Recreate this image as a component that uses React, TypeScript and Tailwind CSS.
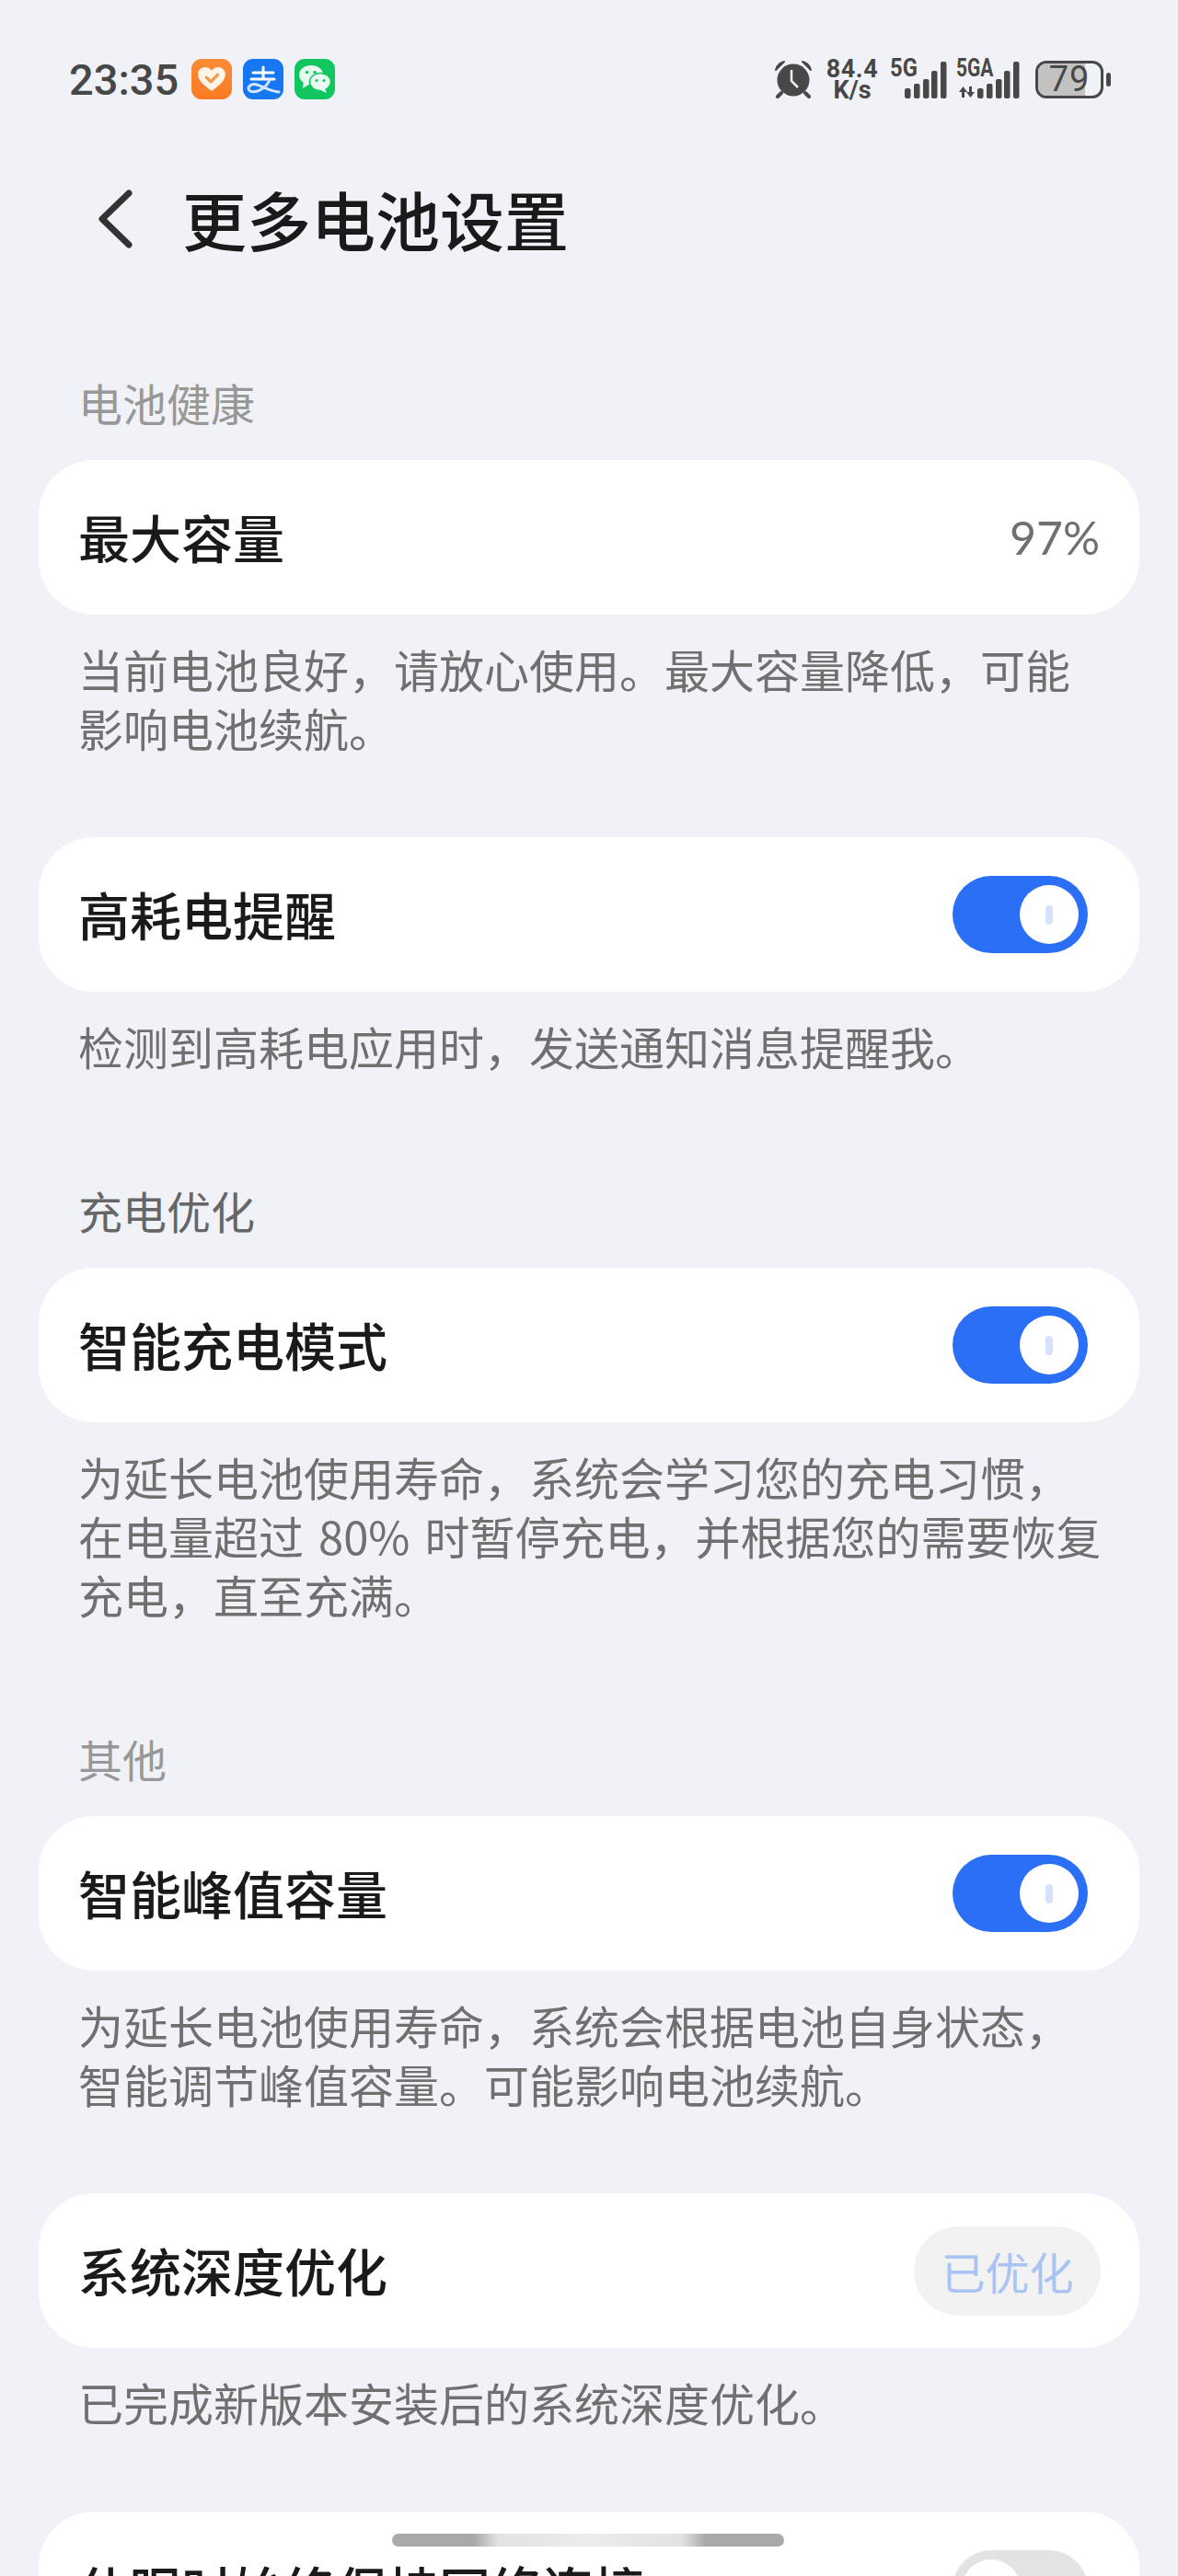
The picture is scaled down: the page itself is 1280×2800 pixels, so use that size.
import React from "react";

const bars = [
  { x: 0, h: 11 },
  { x: 10, h: 16 },
  { x: 20, h: 21 },
  { x: 29, h: 30 },
  { x: 39, h: 40 },
];

const SignalBars = () => (
  <svg width="46" height="42" viewBox="0 0 46 42" className="absolute right-0 bottom-0">
    {bars.map((b) => (
      <rect key={b.x} x={b.x} y={41 - b.h} width="6.5" height={b.h} rx="2" fill="#484848" />
    ))}
  </svg>
);

const Toggle = ({ on = true }: { on?: boolean }) => (
  <div
    className={
      on
        ? "flex h-[84px] w-[147px] items-center justify-end rounded-full bg-[#2b6ff6] pr-[10px]"
        : "flex h-[84px] w-[147px] items-center justify-start rounded-full bg-[#e3e3e3] pl-[10px]"
    }
  >
    <div className="flex h-[64px] w-[64px] items-center justify-center rounded-full bg-white">
      <div className={on ? "h-[21px] w-[8px] rounded-full bg-[#d5e2f9]" : "h-[21px] w-[8px] rounded-full bg-[#e3e3e3]"} />
    </div>
  </div>
);

const Card = ({ title, children }: { title: string; children?: React.ReactNode }) => (
  <div className="flex h-[168px] items-center justify-between rounded-[60px] bg-white pl-[43px] pr-[56px]">
    <span className="pb-[3px] text-[56px] leading-none font-medium text-[#1a1a1a]">{title}</span>
    {children}
  </div>
);

const Desc = ({ children, className = "" }: { children: React.ReactNode; className?: string }) => (
  <p className={"pt-[27px] pb-[2px] pl-[43px] pr-[30px] text-[49px] leading-[64px] text-[#707070] " + className}>{children}</p>
);

const Label = ({ children, dark }: { children: React.ReactNode; dark?: boolean }) => (
  <div
    className={
      dark
        ? "mb-[31px] -mt-[2px] h-[64px] px-[43px] text-[48px] leading-[64px] text-[#666666]"
        : "mb-[31px] -mt-[2px] h-[64px] px-[43px] text-[48px] leading-[64px] text-[#989898]"
    }
  >
    {children}
  </div>
);

export default function App() {
  return (
    <div
      className="relative h-[2800px] w-[1280px] overflow-hidden bg-[#f1f2f7]"
      style={{ fontFamily: '"Noto Sans CJK SC", "Noto Sans", sans-serif' }}
    >
      {/* status bar */}
      <div className="flex h-[172px] items-center justify-between pl-[75px] pr-[73px]">
        <div className="flex items-center">
          <span className="w-[133px] text-[47px] leading-none font-medium text-[#474747] font-['Roboto']">23:35</span>
          <div className="flex gap-[12px]">
            <div className="flex h-[44px] w-[44px] items-center justify-center rounded-[11px] bg-gradient-to-b from-[#fb8b35] to-[#f97b24]">
              <svg width="32" height="28" viewBox="0 0 34 30">
                <path
                  d="M17 29C9 23 1 17 1 9.5 1 4.5 5 1 9.5 1 12.5 1 15.500 2.500 17 5 18.500 2.500 21.500 1 24.500 1 29 1 33 4.500 33 9.500 33 17 25 23 17 29Z"
                  fill="#fdf3e6"
                />
                <path d="M11 13l5 5 8-8" fill="none" stroke="#ef9a45" strokeWidth="3.500" strokeLinecap="round" strokeLinejoin="round" />
              </svg>
            </div>
            <div className="flex h-[44px] w-[44px] items-center justify-center rounded-[11px] bg-[#1677f0]">
              <svg width="44" height="44" viewBox="0 0 44 44" fill="none" strokeLinecap="round">
                <path d="M11 15h22M22 9v13M9 22h25" stroke="#ffffff" strokeWidth="3" />
                <path d="M29 23C25 32 14 38 8 35 3 32 8 26 15 28 22 30 28 35 39 36" stroke="#d4e6fb" strokeWidth="3" />
              </svg>
            </div>
            <div className="flex h-[44px] w-[44px] items-center justify-center rounded-[11px] bg-[#12c65f]">
              <svg width="36" height="32" viewBox="0 0 36 32">
                <ellipse cx="14" cy="11.500" rx="13" ry="10.500" fill="#e8fbf0" />
                <path d="M6 18l-1 8 8-5z" fill="#e8fbf0" />
                <ellipse cx="24" cy="19" rx="11.500" ry="9.500" fill="#e8fbf0" stroke="#12c65f" strokeWidth="1.500" />
                <path d="M29 26l2 5-7-3z" fill="#e8fbf0" />
                <circle cx="9.500" cy="8.500" r="1.700" fill="#12c65f" />
                <circle cx="18" cy="8.500" r="1.700" fill="#12c65f" />
                <circle cx="20" cy="17.500" r="1.500" fill="#12c65f" />
                <circle cx="28" cy="17.500" r="1.500" fill="#12c65f" />
              </svg>
            </div>
          </div>
        </div>
        <div className="flex items-center font-['Roboto'] text-[#484848]">
          <svg width="42" height="42" viewBox="0 0 42 42" className="mr-[13px]">
            <circle cx="21" cy="22" r="17.500" fill="#484848" />
            <path d="M2 11C3 6 7 3 11 2L2 11zM40 11c-1-5-5-8-9-9l9 9z" fill="#484848" stroke="#484848" strokeWidth="2" strokeLinejoin="round" />
            <path d="M8 36l-4 4M34 36l4 4" stroke="#484848" strokeWidth="4" strokeLinecap="round" />
            <path d="M19 11v12l7 7" fill="none" stroke="#f1f2f7" strokeWidth="2.500" />
          </svg>
          <div className="mr-[11px] flex w-[60px] flex-col items-center font-bold">
            <span className="text-[27px] leading-[23px] tracking-[0.5px] whitespace-nowrap">84.4</span>
            <span className="text-[27px] leading-[22px]">K/s</span>
          </div>
          <div className="relative mr-[10px] h-[44px] w-[62px]">
            <span className="absolute left-0 top-[-4px] origin-top-left scale-x-[0.85] text-[28px] leading-[28px] font-bold">5G</span>
            <SignalBars />
          </div>
          <div className="relative mr-[17px] h-[44px] w-[69px]">
            <span className="absolute left-0 top-[-4px] origin-top-left scale-x-[0.75] text-[28px] leading-[28px] font-bold whitespace-nowrap">5GA</span>
            <svg width="17" height="12" viewBox="0 0 17 12" className="absolute bottom-[2px] left-[3px]">
              <path d="M4.500 0L0 6h3v6h3V6h3zM12.500 12L8 6h3V0h3v6h3z" fill="#484848" />
            </svg>
            <SignalBars />
          </div>
          <div className="relative flex h-[41px] w-[74px] items-center justify-center overflow-hidden rounded-[12px] border-[3px] border-[#484848]">
            <div className="absolute inset-y-0 left-0 w-[51px] bg-[#c2c2c2]" />
            <span className="relative text-[38px] leading-none font-normal tracking-[1px]">79</span>
          </div>
          <div className="ml-[3px] h-[15px] w-[5px] rounded-full bg-[#484848]" />
        </div>
      </div>

      {/* header */}
      <div className="flex h-[134px] items-center pb-[3px] pl-[105px]">
        <svg width="40" height="64" viewBox="0 0 40 64">
          <path d="M35 4L6 32l29 28" fill="none" stroke="#333333" strokeWidth="7" strokeLinecap="round" strokeLinejoin="round" />
        </svg>
        <h1 className="ml-[53px] text-[70px] leading-none font-medium text-[#1a1a1a]">更多电池设置</h1>
      </div>

      <div className="px-[42px] pt-[101px]">
        <Label>电池健康</Label>
        <Card title="最大容量">
          <span className="mr-[-13px] font-['Lato'] text-[50px] leading-none text-[#707070]">97%</span>
        </Card>
        <Desc>当前电池良好，请放心使用。最大容量降低，可能影响电池续航。</Desc>

        <div className="mt-[85px]">
          <Card title="高耗电提醒">
            <Toggle />
          </Card>
        </div>
        <Desc>检测到高耗电应用时，发送通知消息提醒我。</Desc>

        <div className="mt-[114px]">
          <Label dark>充电优化</Label>
        </div>
        <Card title="智能充电模式">
          <Toggle />
        </Card>
        <Desc className="[word-spacing:5px]">为延长电池使用寿命，系统会学习您的充电习惯，在电量超过 80% 时暂停充电，并根据您的需要恢复充电，直至充满。</Desc>

        <div className="mt-[114px]">
          <Label>其他</Label>
        </div>
        <Card title="智能峰值容量">
          <Toggle />
        </Card>
        <Desc>为延长电池使用寿命，系统会根据电池自身状态，智能调节峰值容量。可能影响电池续航。</Desc>

        <div className="mt-[85px]">
          <Card title="系统深度优化">
            <div className="mr-[-14px] flex h-[97px] w-[203px] items-center justify-center rounded-full bg-[#f2f2f3] text-[48px] leading-none text-[#a9c4f3]">
              已优化
            </div>
          </Card>
        </div>
        <Desc>已完成新版本安装后的系统深度优化。</Desc>

        <div className="mt-[85px]">
          <Card title="休眠时始终保持网络连接">
            <Toggle on={false} />
          </Card>
        </div>
      </div>

      {/* gesture bar */}
      <div className="absolute left-[426px] top-[2754px] h-[14px] w-[426px] rounded-full bg-[linear-gradient(90deg,#a9a9a9_0%,#a9a9a9_21%,#e2e2e2_27%,#ececec_50%,#e2e2e2_74%,#a9a9a9_80%,#a9a9a9_100%)]" />
    </div>
  );
}
